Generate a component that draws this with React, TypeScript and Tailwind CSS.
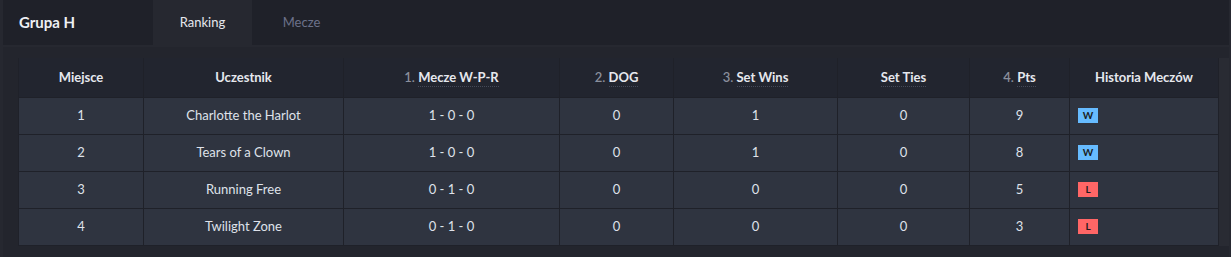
import React from 'react'

type Row = {
  pos: number
  name: string
  wpr: string
  dog: number
  setWins: number
  setTies: number
  pts: number
  history: ('W' | 'L')[]
}

const rows: Row[] = [
  { pos: 1, name: 'Charlotte the Harlot', wpr: '1 - 0 - 0', dog: 0, setWins: 1, setTies: 0, pts: 9, history: ['W'] },
  { pos: 2, name: 'Tears of a Clown', wpr: '1 - 0 - 0', dog: 0, setWins: 1, setTies: 0, pts: 8, history: ['W'] },
  { pos: 3, name: 'Running Free', wpr: '0 - 1 - 0', dog: 0, setWins: 0, setTies: 0, pts: 5, history: ['L'] },
  { pos: 4, name: 'Twilight Zone', wpr: '0 - 1 - 0', dog: 0, setWins: 0, setTies: 0, pts: 3, history: ['L'] },
]

function Head({ n, label }: { n?: number; label: string }) {
  return (
    <th className="border-x border-[#1f2129] font-bold text-[13px] text-[#e6e8ee]">
      {n && <span className="text-[#8a8f9c] font-semibold">{n}. </span>}
      <span className={n || label === 'Set Ties' ? 'border-b border-dotted border-[#454a58] pb-[1px]' : ''}>{label}</span>
    </th>
  )
}

export default function App() {
  return (
    <div className="min-h-[257px] bg-[#262830] pl-[3px] pr-[2px] text-[#dfe2ea]" style={{ fontFamily: 'Lato, "Open Sans", sans-serif' }}>
      <div className="flex h-[45px] items-stretch bg-[#1f2129]">
        <div className="w-[150px] pl-[16px] flex items-center text-[15px] font-bold text-[#eef0f4]">Grupa H</div>
        <div className="w-[99px] flex items-center justify-center bg-[#262830] text-[13px] text-[#e6e8ee]">Ranking</div>
        <div className="w-[99px] flex items-center justify-center text-[13px] text-[#6c7189]">Mecze</div>
      </div>
      <div className="h-[2px] bg-[#262830]" />
      <div className="flex bg-[#23252d] pl-[15px] pt-[11px] pb-[12px]">
        <table className="w-[1201px] border-collapse text-center text-[13px]">
          <thead>
            <tr className="h-[39px] bg-[#22252f]">
              <Head label="Miejsce" />
              <Head label="Uczestnik" />
              <Head n={1} label="Mecze W-P-R" />
              <Head n={2} label="DOG" />
              <Head n={3} label="Set Wins" />
              <Head label="Set Ties" />
              <Head n={4} label="Pts" />
              <Head label="Historia Meczów" />
            </tr>
          </thead>
          <tbody>
            {rows.map((r) => (
              <tr key={r.pos} className="h-[37px] bg-[#2f3440] text-[#dfe2ea]">
                <td className="w-[125px] border border-[#1f2129]">{r.pos}</td>
                <td className="w-[200px] border border-[#1f2129]">{r.name}</td>
                <td className="w-[216px] border border-[#1f2129]">{r.wpr}</td>
                <td className="w-[114px] border border-[#1f2129]">{r.dog}</td>
                <td className="w-[164px] border border-[#1f2129]">{r.setWins}</td>
                <td className="w-[132px] border border-[#1f2129]">{r.setTies}</td>
                <td className="w-[100px] border border-[#1f2129]">{r.pts}</td>
                <td className="border border-[#1f2129] text-left pl-[8px]">
                  <div className="flex gap-1">
                    {r.history.map((h, i) => (
                      <span
                        key={i}
                        className={
                          'inline-flex h-[15px] w-[20px] items-center justify-center text-[10px] font-bold text-[#1a1c22] ' +
                          (h === 'W' ? 'bg-[#66bbff]' : 'bg-[#ff6666]')
                        }
                      >
                        {h}
                      </span>
                    ))}
                  </div>
                </td>
              </tr>
            ))}
          </tbody>
        </table>
        <div className="w-[10px] bg-[#292b33]" />
      </div>
    </div>
  )
}
